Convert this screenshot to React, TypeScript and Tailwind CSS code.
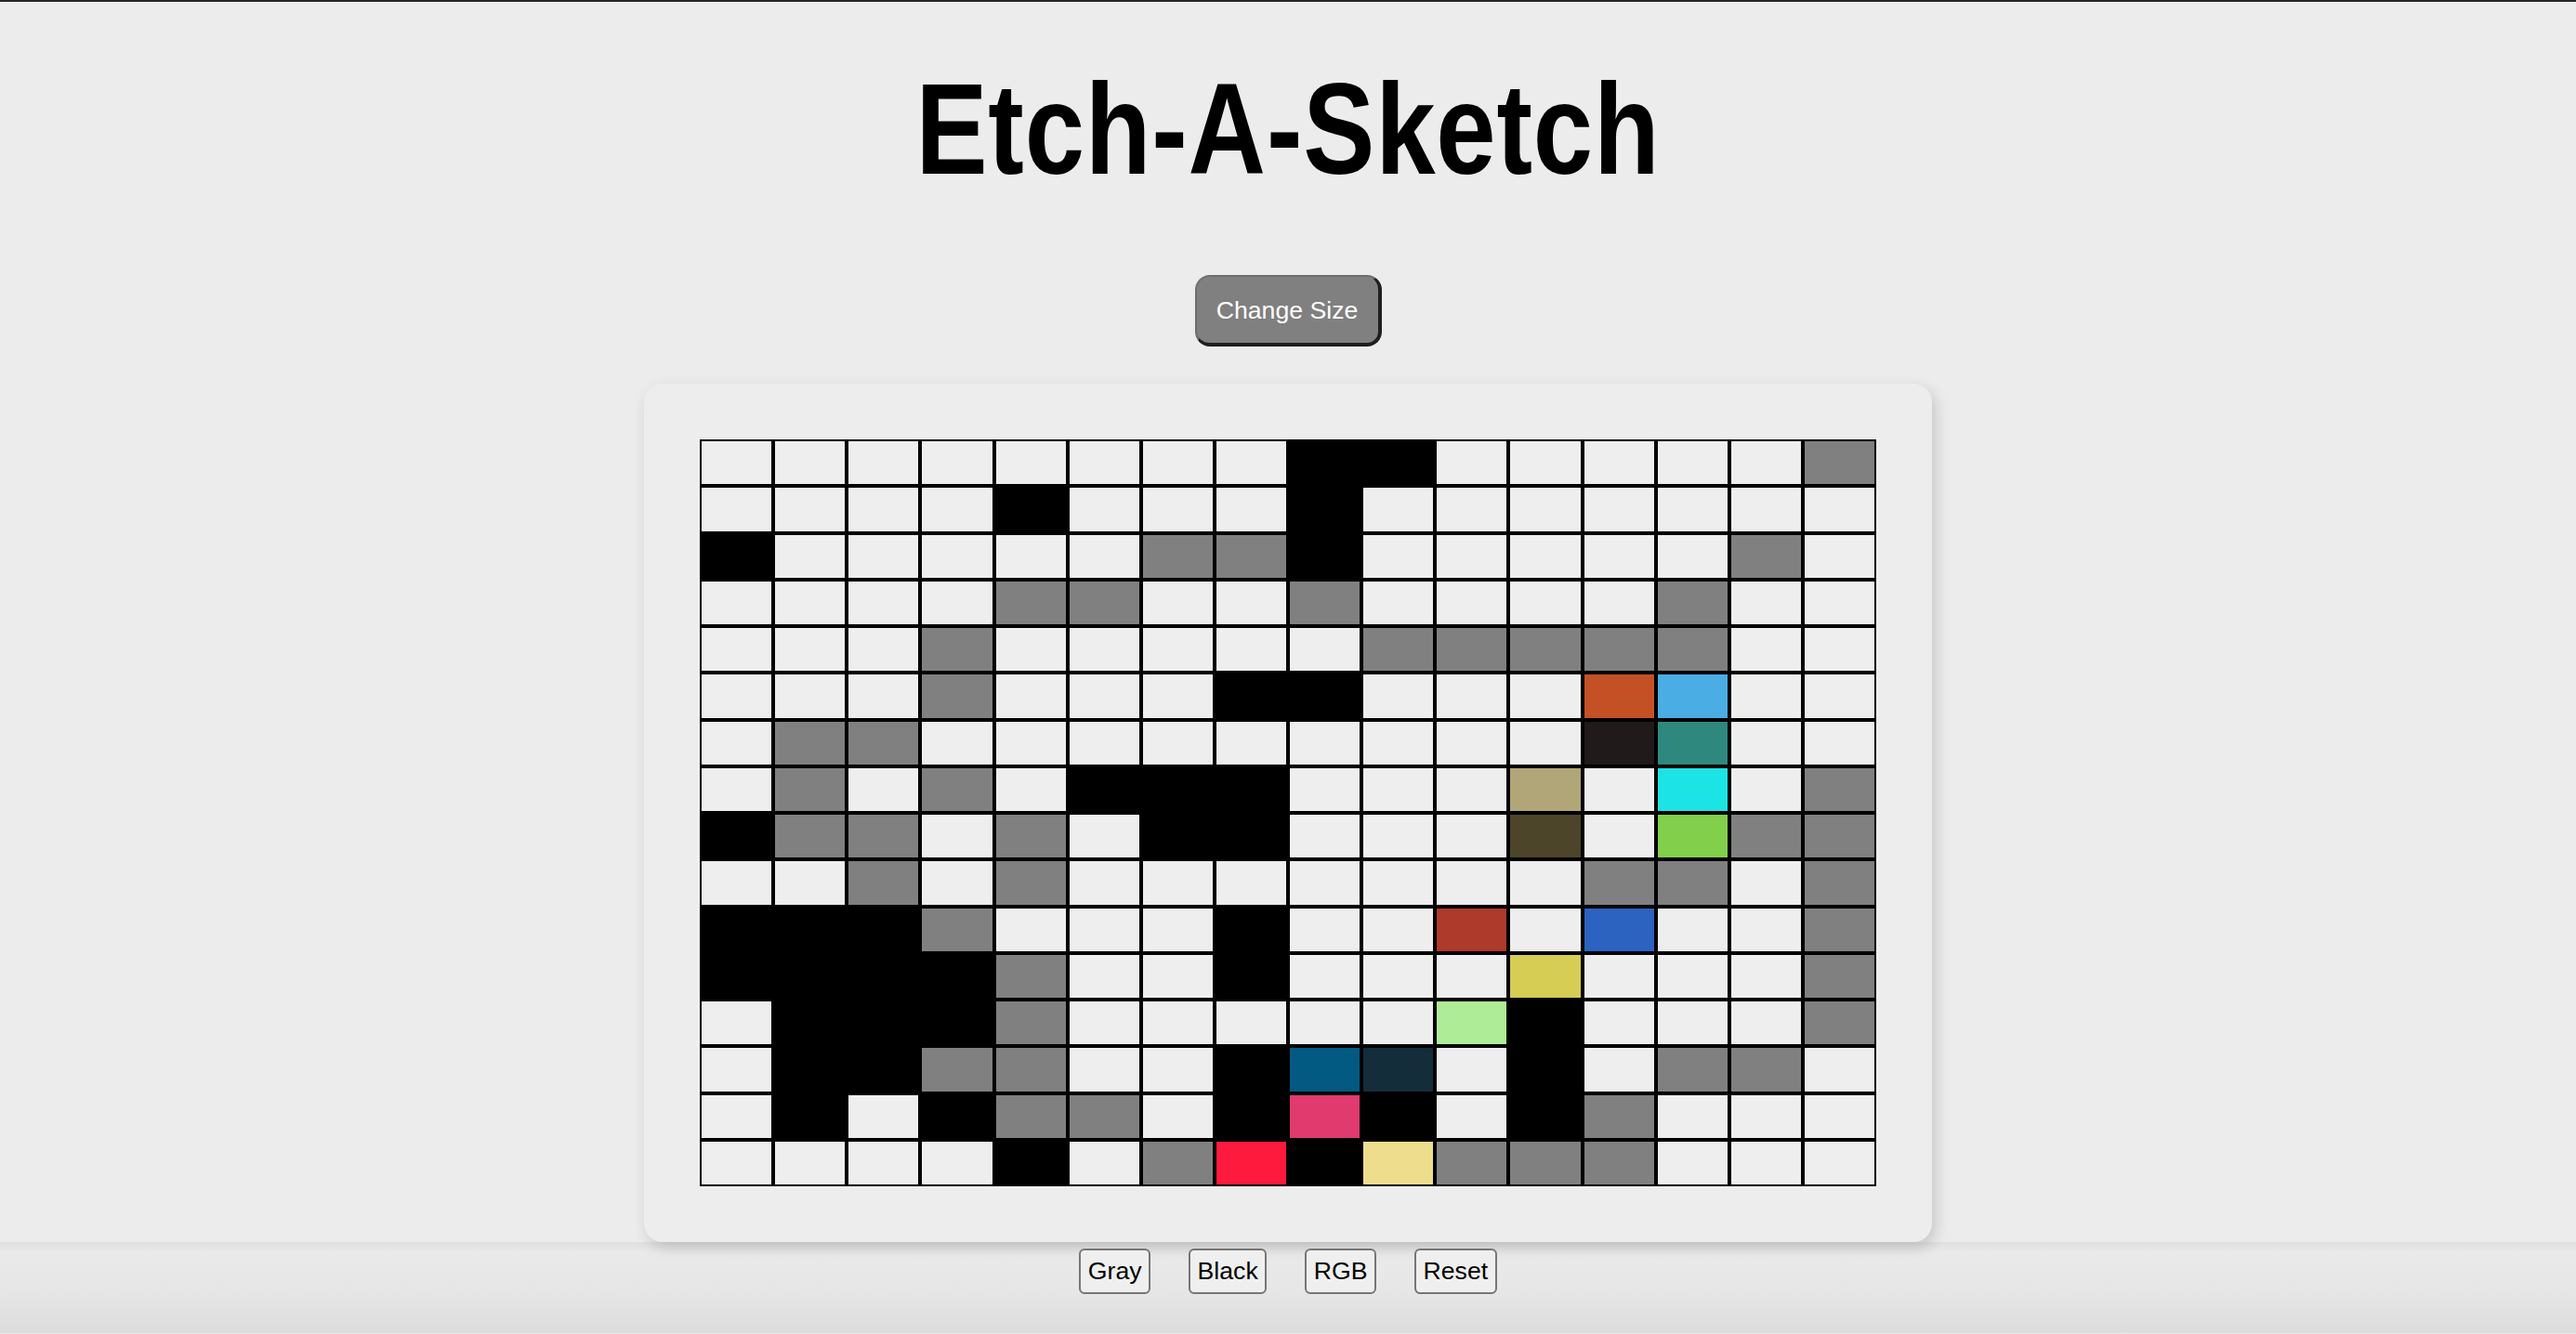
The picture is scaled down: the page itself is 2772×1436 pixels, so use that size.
const ROWS = [
  "........kk.....g",
  "....k...k.......",
  "k.....ggk.....g.",
  "....gg..g....g..",
  "...g.....ggggg..",
  "...g...kk...ob..",
  ".gg.........dt..",
  ".g.g.kkk...h.c.g",
  "kgg.g.kk...v.ngg",
  "..g.g.......gg.g",
  "kkkg...k..r.u..g",
  "kkkkg..k...y...g",
  ".kkkg.....lk...g",
  ".kkgg..ksm.k.gg.",
  ".k.kgg.kpk.kg...",
  "....k.gxkeggg...",
];

const CELL_BG: Record<string, string> = {
  ".": "bg-[#eeeeee]",
  k: "bg-black",
  g: "bg-[#808080]",
  o: "bg-[#c35125]",
  b: "bg-[#4aade3]",
  d: "bg-[#201a1a]",
  t: "bg-[#2e887e]",
  h: "bg-[#b0a678]",
  c: "bg-[#1ce4e4]",
  v: "bg-[#4d452a]",
  n: "bg-[#82cf4c]",
  r: "bg-[#ad3a2a]",
  u: "bg-[#2c63c1]",
  y: "bg-[#d6cd54]",
  l: "bg-[#aeec98]",
  s: "bg-[#025a82]",
  m: "bg-[#142d3b]",
  p: "bg-[#e03a6e]",
  x: "bg-[#fe1a3c]",
  e: "bg-[#eedd8c]",
};

const MODES = ["Gray", "Black", "RGB", "Reset"];

function SketchGrid() {
  return (
    <div className="grid grid-cols-16 grid-rows-16 w-[1266px] h-[804px]">
      {ROWS.flatMap((row, r) =>
        row.split("").map((ch, c) => (
          <div key={`${r}-${c}`} className={`border-2 border-black ${CELL_BG[ch]}`} />
        ))
      )}
    </div>
  );
}

export default function App() {
  return (
    <div className="min-h-screen bg-[#ececec] font-['Liberation_Sans',Arial,sans-serif]">
      <main className="flex flex-col items-center border-t-2 border-[#262626] bg-[#ececec]">
        {/* no narrow face installed, so squeeze the bold sans */}
        <h1 className="mt-[56px] text-[140px] leading-[161px] font-bold text-black scale-x-[0.826] tracking-[1px]">
          Etch-A-Sketch
        </h1>

        <button
          className="mt-[77px] w-[201px] h-[77px] rounded-[16px] bg-[#808080] text-white text-[26.67px] border-t-2 border-l-2 border-r-4 border-b-4 border-t-[#6e6e6e] border-l-[#6e6e6e] border-r-[#1f1f1f] border-b-[#1f1f1f]"
        >
          Change Size
        </button>

        <div className="mt-[40px] p-[60px] rounded-[20px] bg-[#ededed] shadow-[4px_6px_16px_rgba(0,0,0,0.16)]">
          <SketchGrid />
        </div>
      </main>

      {/* mode buttons sit on the darker strip below the board */}
      <div className="flex justify-center gap-[41px] pt-[7px] h-[98px] bg-[linear-gradient(to_bottom,#e0e0e0_0%,#eaeaea_12%,#e6e6e6_55%,#dcdcdc_100%)]">
        {MODES.map((m) => (
          <button
            key={m}
            className="h-[49px] px-[7.5px] border-2 border-[#767676] rounded-[6px] bg-[#efefef] text-black text-[26.67px] leading-none"
          >
            {m}
          </button>
        ))}
      </div>
    </div>
  );
}
